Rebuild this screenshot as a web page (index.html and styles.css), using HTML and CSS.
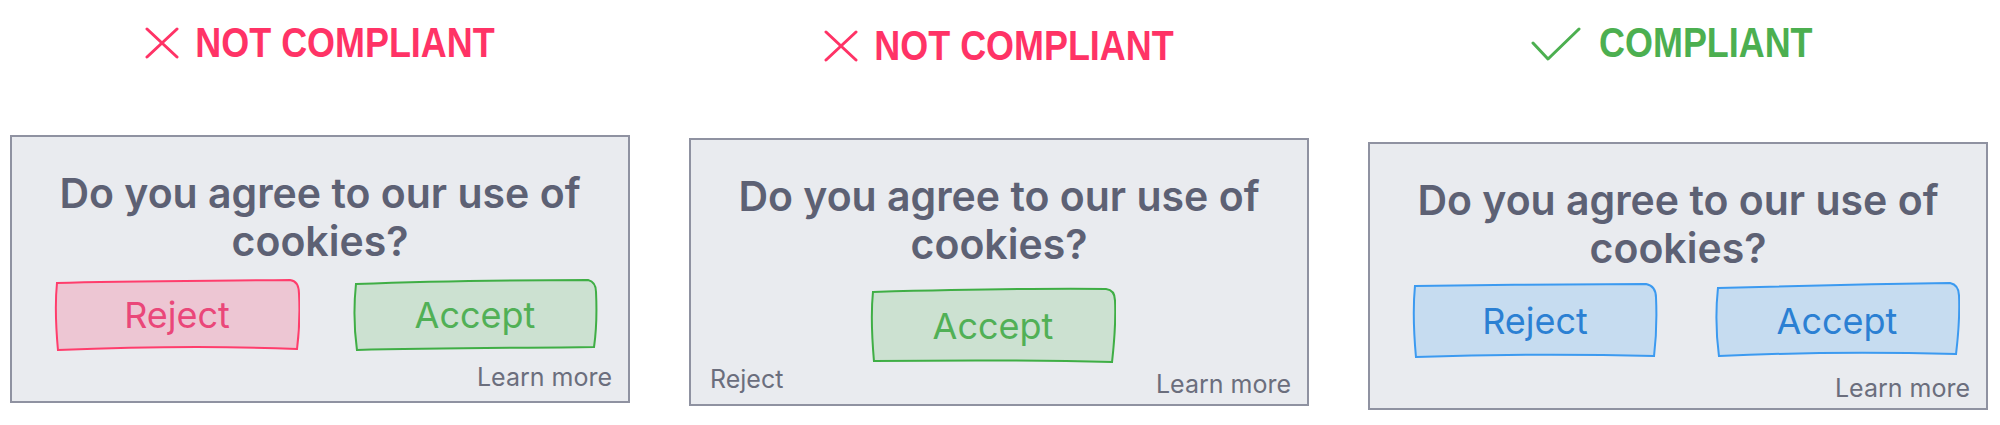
FILE: index.html
```html
<!DOCTYPE html>
<html lang="en">
<head>
    <meta charset="UTF-8">
    <title>Cookie consent patterns</title>
    <link rel="stylesheet" href="styles.css">
</head>
<body>
    <main class="board">
        <!-- 1: reject is a button, but styled red vs green -->
        <section class="case">
            <h2 class="verdict verdict-bad">
                <svg class="verdict-icon icon-cross" viewBox="0 0 34 32"><path d="M2 2 L32 30 M32 2 L2 30"/></svg>
                <span class="verdict-text">NOT COMPLIANT</span>
            </h2>
            <div class="banner">
                <p class="banner-question">Do you agree to our use of cookies?</p>
                <div class="banner-actions">
                    <button class="sketch-btn sketch-red">
                        <svg viewBox="0 0 248 74" preserveAspectRatio="none"><path d="M3 5 C70 3 150 3 238 2 Q247 3 247 16 C248 35 247 55 245 71 C170 68 80 69 4 72 C2 50 1 25 3 5 Z"/></svg>
                        <span>Reject</span>
                    </button>
                    <button class="sketch-btn sketch-green">
                        <svg viewBox="0 0 248 74" preserveAspectRatio="none"><path d="M4 6 C80 3 160 2 238 2 Q246 4 246 14 C247 35 246 55 244 69 C170 70 90 70 5 72 C2 50 2 25 4 6 Z"/></svg>
                        <span>Accept</span>
                    </button>
                </div>
                <div class="banner-foot">
                    <a class="banner-link" href="#">Learn more</a>
                </div>
            </div>
        </section>

        <!-- 2: reject hidden as plain text -->
        <section class="case">
            <h2 class="verdict verdict-bad verdict-low">
                <svg class="verdict-icon icon-cross" viewBox="0 0 34 32"><path d="M2 2 L32 30 M32 2 L2 30"/></svg>
                <span class="verdict-text">NOT COMPLIANT</span>
            </h2>
            <div class="banner banner-low">
                <p class="banner-question">Do you agree to our use of cookies?</p>
                <div class="banner-actions banner-single">
                    <button class="sketch-btn sketch-green sketch-tall">
                        <svg viewBox="0 0 248 78" preserveAspectRatio="none"><path d="M3 5 C80 3 160 1 238 2 Q247 3 247 14 C248 35 246 58 244 76 C170 74 90 74 4 75 C2 52 1 25 3 5 Z"/></svg>
                        <span>Accept</span>
                    </button>
                </div>
                <div class="banner-foot">
                    <a class="banner-link" href="#">Reject</a>
                    <a class="banner-link link-low" href="#">Learn more</a>
                </div>
            </div>
        </section>

        <!-- 3: both choices equal -->
        <section class="case">
            <h2 class="verdict verdict-good">
                <svg class="verdict-icon icon-check" viewBox="0 0 50 34"><path d="M2 16 L17 32 L48 2"/></svg>
                <span class="verdict-text">COMPLIANT</span>
            </h2>
            <div class="banner banner-lower">
                <p class="banner-question">Do you agree to our use of cookies?</p>
                <div class="banner-actions">
                    <button class="sketch-btn sketch-blue sketch-tall">
                        <svg viewBox="0 0 248 78" preserveAspectRatio="none"><path d="M3 4 C80 3 160 2 236 2 Q246 4 246 16 C247 38 246 58 244 75 C170 73 90 73 4 76 C2 54 1 25 3 4 Z"/></svg>
                        <span>Reject</span>
                    </button>
                    <button class="sketch-btn sketch-blue sketch-tall">
                        <svg viewBox="0 0 248 78" preserveAspectRatio="none"><path d="M4 6 C80 4 160 2 238 1 Q247 3 247 14 C248 36 246 56 244 73 C170 71 90 71 5 75 C2 52 2 25 4 6 Z"/></svg>
                        <span>Accept</span>
                    </button>
                </div>
                <div class="banner-foot">
                    <a class="banner-link" href="#">Learn more</a>
                </div>
            </div>
        </section>
    </main>
</body>
</html>
```

FILE: styles.css
```css
body {
    margin: 0;
    background-color: #fff;
    font-family: Inter, "Noto Sans", sans-serif;
}
.board {
    display: grid;
    grid-template-columns: repeat(3, 620px);
    column-gap: 59px;
    padding: 0 10px;
}
.case {
    display: flex;
    flex-direction: column;
}

/* 판정 헤더 */
.verdict {
    height: 135px;
    box-sizing: border-box;
    margin: 0;
    padding-top: 22px;
    display: flex;
    justify-content: center;
    align-items: flex-start;
    gap: 16px;
    font-family: "Liberation Sans", Arial, sans-serif;
    font-weight: 700;
    font-size: 42px;
    line-height: 42px;
}
.verdict-text {
    display: inline-block;
    transform: scaleX(0.855); /* 좁은 글꼴 대신 가로 압축 */
}
.verdict-bad .verdict-text {
    margin: 0 -25px;
}
.verdict-good .verdict-text {
    margin: 0 -18px;
}
.verdict-low {
    height: 138px;
    padding-top: 25px;
}
.verdict-bad {
    color: #ff3366;
}
.verdict-good {
    color: #4caf50;
    gap: 18px;
    height: 142px;
    padding-right: 12px;
}
.verdict-icon {
    fill: none;
    stroke: currentColor;
    stroke-width: 3;
    stroke-linecap: round;
    stroke-linejoin: round;
}
.icon-cross {
    width: 34px;
    height: 32px;
    margin-top: 5px;
}
.icon-check {
    width: 50px;
    height: 34px;
    margin-top: 5px;
}

/* 쿠키 배너 */
.banner {
    height: 268px;
    box-sizing: border-box;
    display: flex;
    flex-direction: column;
    padding-top: 32px;
    padding-bottom: 9px;
    background-color: #e9ebef;
    border: 2px solid #8f92a1;
}
.banner-question {
    margin: 0;
    padding: 0 36px;
    text-align: center;
    color: #5d6174;
    font-size: 41px;
    font-weight: 600;
    line-height: 48px;
}
.banner-actions {
    display: flex;
    justify-content: space-between;
    margin-top: 13px;
    padding: 0 30px 0 42px;
}
.banner-single {
    justify-content: center;
    margin-top: 19px;
    padding: 0 12px 0 0;
}
.sketch-btn {
    position: relative;
    width: 246px;
    height: 74px;
    padding: 0;
    border: none;
    background: none;
    font-family: inherit;
    font-size: 36px;
    cursor: pointer;
}
.sketch-tall {
    height: 77px;
}
.sketch-btn svg {
    position: absolute;
    inset: 0;
    width: 100%;
    height: 100%;
}
.sketch-btn path {
    stroke-width: 2;
    vector-effect: non-scaling-stroke;
}
.sketch-btn span {
    position: relative;
}
.sketch-red {
    color: #ea4779;
}
.sketch-red path {
    fill: #edc6d3;
    stroke: #ff3d6c;
}
.sketch-green {
    color: #51b056;
}
.sketch-green path {
    fill: #cce1d1;
    stroke: #3fae45;
}
.sketch-blue {
    color: #2b80d3;
}
.sketch-blue path {
    fill: #c6dcf0;
    stroke: #3c9af0;
}
.banner-foot {
    margin-top: auto;
    display: flex;
    justify-content: flex-end;
    align-items: flex-start;
    padding: 0 16px 0 19px;
}
.banner-foot .banner-link:first-child:not(:last-child) {
    margin-right: auto;
}
.banner-link {
    color: #6b6e7d;
    font-size: 25px;
    line-height: 30px;
    text-decoration: none;
}
.link-low {
    margin-top: 5px;
}
.banner-low {
    padding-bottom: 6px;
}
.banner-lower {
    padding-bottom: 5px;
}
.banner-lower .banner-actions {
    margin-top: 10px;
    padding-right: 26px;
}
```
